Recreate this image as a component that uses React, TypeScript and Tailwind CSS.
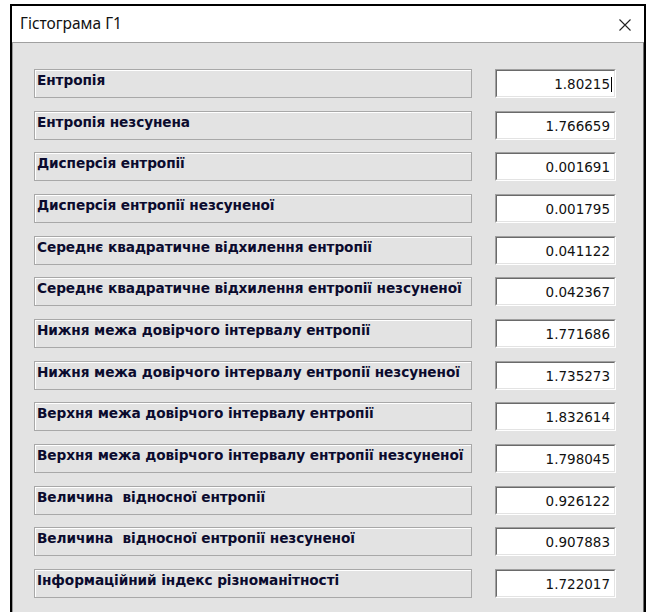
import React from "react";

const rows: [string, string][] = [
  ["Ентропія", "1.80215"],
  ["Ентропія незсунена", "1.766659"],
  ["Дисперсія ентропії", "0.001691"],
  ["Дисперсія ентропії незсуненої", "0.001795"],
  ["Середнє квадратичне відхилення ентропії", "0.041122"],
  ["Середнє квадратичне відхилення ентропії незсуненої", "0.042367"],
  ["Нижня межа довірчого інтервалу ентропії", "1.771686"],
  ["Нижня межа довірчого інтервалу ентропії незсуненої", "1.735273"],
  ["Верхня межа довірчого інтервалу ентропії", "1.832614"],
  ["Верхня межа довірчого інтервалу ентропії незсуненої", "1.798045"],
  ["Величина  відносної ентропії", "0.926122"],
  ["Величина  відносної ентропії незсуненої", "0.907883"],
  ["Інформаційний індекс різноманітності", "1.722017"],
];

function Row({ label, value, focused }: { label: string; value: string; focused?: boolean }) {
  return (
    <div className="flex h-[29px] items-stretch">
      {/* static caption */}
      <div className="w-[438px] border border-[#a8a8a8] shadow-[inset_1px_1px_0_#ffffff]">
        <div
          className="pl-[2px] pt-[2px] text-[13.7px] font-bold leading-[16px] tracking-[-0.1px] text-[#0b0b2e] whitespace-pre"
          style={{ fontFamily: '"DejaVu Sans", "Liberation Sans", sans-serif' }}
        >
          {label}
        </div>
      </div>
      {/* edit box */}
      <div className="ml-[23px] w-[121px] border border-t-[#a0a0a0] border-l-[#a0a0a0] border-b-white border-r-white">
        <div className="flex h-full items-center justify-end border border-t-[#6a6a6a] border-l-[#6a6a6a] border-b-[#e3e3e3] border-r-[#e3e3e3] bg-white pr-[2px] pt-[2px]">
          <span
            className="text-[13.5px] leading-[15px] text-[#111111]"
            style={{ fontFamily: '"DejaVu Sans", "Liberation Sans", sans-serif' }}
          >
            {value}
          </span>
          {focused ? (
            <span className="ml-[1px] h-[15px] w-[1px] bg-black" />
          ) : (
            <span className="ml-[1px] w-[1px]" />
          )}
        </div>
      </div>
    </div>
  );
}

export default function App() {
  return (
    <div className="h-[612px] w-[648px] overflow-hidden bg-white pl-[10px] pt-[4px]">
      <div className="h-[640px] w-[636px] border-2 border-b-0 border-black bg-white">
        {/* title bar */}
        <div className="flex h-[36px] items-center justify-between pl-[8px] pr-[13px]">
          <span
            className="text-[15.5px] text-[#111111]"
            style={{ fontFamily: '"Noto Sans", "Open Sans", sans-serif' }}
          >
            Гістограма Г1
          </span>
          <svg width="12" height="12" viewBox="0 0 12 12" className="mt-[1px]">
            <path d="M0.5 0.5 L11.5 11.5 M11.5 0.5 L0.5 11.5" stroke="#222" strokeWidth="1.1" fill="none" />
          </svg>
        </div>
        {/* client area */}
        <div className="h-[600px] border-l border-r border-t border-l-[#9a9a9a] border-r-[#6e6e6e] border-t-[#a0a0a0] bg-[#e3e3e3] pl-[21px] pt-[26px]">
          <div className="flex flex-col gap-[12.67px]">
            {rows.map(([l, v], i) => (
              <Row key={i} label={l} value={v} focused={i === 0} />
            ))}
          </div>
        </div>
      </div>
    </div>
  );
}
